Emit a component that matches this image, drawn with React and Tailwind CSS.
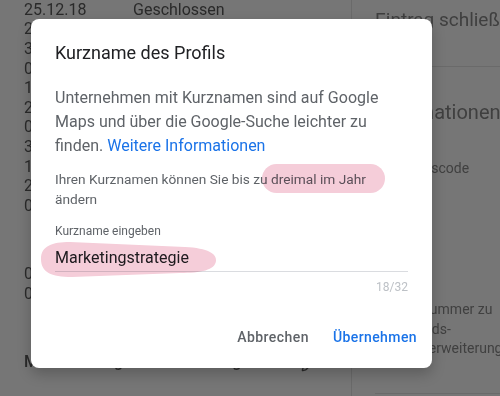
import { Pencil } from "lucide-react";

const rows = ["26.12.18", "31.12.18", "01.01.19", "14.02.19", "21.04.19", "01.05.19", "30.05.19", "10.06.19", "20.06.19", "03.10.19"];

export default function App() {
    return (
        <div
            className="relative w-[500px] h-[396px] overflow-hidden bg-[#767676] flex"
            style={{ fontFamily: "Roboto, 'Liberation Sans', sans-serif" }}
        >
            {/* Left: opening hours list (behind scrim) */}
            <div className="w-[352px] shrink-0 border-r border-[#6a6a6a] pl-6 text-[16px] text-[#2a2a2a]">
                <div className="flex h-[19.6px] items-center">
                    <span className="w-[109px]">25.12.18</span>
                    <span>Geschlossen</span>
                </div>
                {rows.map((d) => (
                    <div key={d} className="flex h-[19.6px] items-center">
                        <span className="w-[109px]">{d}</span>
                        <span>09:00–18:00</span>
                    </div>
                ))}
                <div className="mt-[49px]">
                    <div className="flex h-[19.6px] items-center">
                        <span className="w-[109px]">08.04.19</span>
                        <span>10:00–14:00</span>
                    </div>
                    <div className="flex h-[19.6px] items-center">
                        <span className="w-[109px]">09.04.19</span>
                        <span>10:00–14:00</span>
                    </div>
                </div>
                <div className="mt-[48px] flex h-[20px] items-center justify-between pr-[34px] font-medium">
                    <span>Mehr Öffnungszeiten hinzufügen</span>
                    <Pencil size={16} className="mt-1 text-[#2a2a2a]" />
                </div>
            </div>

            {/* Right: side info panel */}
            <div className="flex-1 flex flex-col">
                <div className="h-[67px] shrink-0 border-b border-[#6a6a6a] pl-[23px] pt-[6px]">
                    <div className="text-[19px] leading-7 text-[#3f3f3f] whitespace-nowrap">Eintrag schließen</div>
                </div>
                <div className="pl-[23px] whitespace-nowrap">
                    <div className="mt-[31px] text-[20px] leading-7 text-[#3f3f3f]">Informationen für Kunden</div>
                    <div className="mt-[32px] text-[14px] leading-5 text-[#404040]">Geschäftscode</div>
                    <div className="mt-[122px] text-[14px] leading-[19.5px] text-[#404040]">
                        Kundennummer zu
                        <br />
                        Google Ads-
                        <br />
                        Standorterweiterung
                    </div>
                    <div className="mt-[34px] border-t border-[#6a6a6a]" />
                </div>
            </div>

            {/* Dialog */}
            <div className="absolute left-[31px] top-[19px] w-[401px] rounded-lg bg-white shadow-[0_6px_14px_rgba(0,0,0,0.22)]">
                <div className="px-6 pt-[22px]">
                    <h2 className="text-[18px] leading-6 text-[#202124]">Kurzname des Profils</h2>
                    <p className="mt-[21px] text-[16px] leading-6 text-[#5f6368]">
                        Unternehmen mit Kurznamen sind auf Google
                        <br />
                        Maps und über die Google-Suche leichter zu
                        <br />
                        finden. <span className="text-[#1a73e8]">Weitere Informationen</span>
                    </p>
                    <p className="mt-[11px] text-[13.7px] leading-5 text-[#5f6368]">
                        Ihren Kurznamen können Sie bis zu dreimal im Jahr
                        <br />
                        ändern
                    </p>
                    <div className="mt-[14px] text-[12px] leading-4 text-[#5f6368]">Kurzname eingeben</div>
                    <div className="mt-[7px] border-b border-[#dadce0] pb-px text-[16px] leading-6 text-[#202124]">
                        Marketingstrategie
                    </div>
                    <div className="mt-[7px] text-right text-[12px] leading-4 text-[#bdc1c6]">18/32</div>
                </div>
                <div className="flex justify-end gap-2 pr-[7px] pt-6 pb-[13px]">
                    <button className="h-9 px-2 text-[14px] font-medium tracking-[0.45px] text-[#5f6368]">Abbrechen</button>
                    <button className="h-9 px-2 text-[14px] font-medium tracking-[0.4px] text-[#1a73e8]">Übernehmen</button>
                </div>

                {/* Highlighter marks */}
                <div className="pointer-events-none absolute left-[231px] top-[145px] h-[29px] w-[123px] rounded-full bg-[#f5cdd9] mix-blend-multiply" />
                <svg
                    className="pointer-events-none absolute left-[9px] top-[221px] mix-blend-multiply"
                    width="178"
                    height="40"
                    viewBox="0 0 178 40"
                >
                    <path
                        d="M1 19 C1 6 12 2 30 2 L145 7 C168 8 177 14 176 21 C175 30 161 33 140 33 L32 37 C11 37 1 32 1 19 Z"
                        fill="#f5cdd9"
                    />
                </svg>
            </div>
        </div>
    );
}
